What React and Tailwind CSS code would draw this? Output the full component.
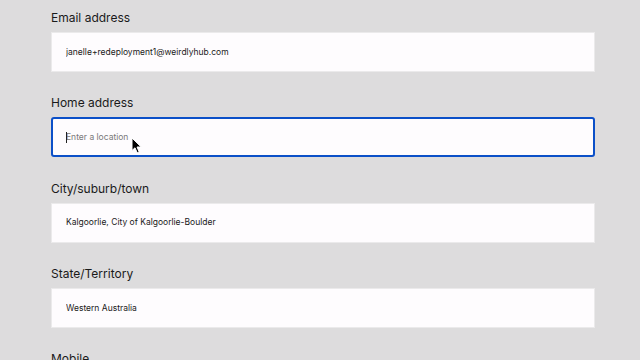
import { useState } from "react";

const fields = [
  { label: "Email address", value: "janelle+redeployment1@weirdlyhub.com" },
  { label: "Home address", value: "", placeholder: "Enter a location", focused: true },
  { label: "City/suburb/town", value: "Kalgoorlie, City of Kalgoorlie-Boulder" },
  { label: "State/Territory", value: "Western Australia" },
  { label: "Mobile", value: "" },
];

function Pointer() {
  return (
    <svg
      className="absolute left-[131px] top-[137px] pointer-events-none"
      width="12"
      height="17"
      viewBox="0 0 12 17"
    >
      <path
        d="M1 1 L1 13.5 L4 10.8 L6.2 15.8 L8.2 14.9 L6 10 L10.2 10 Z"
        fill="#000"
        stroke="#fff"
        strokeWidth="1"
        strokeLinejoin="round"
      />
    </svg>
  );
}

export default function App() {
  const [form, setForm] = useState(
    Object.fromEntries(fields.map((f) => [f.label, f.value]))
  );

  return (
    <div
      className="relative w-[640px] h-[360px] overflow-hidden bg-[#dddcdd] pl-[51px] pr-[45px] pt-[10px]"
      style={{ fontFamily: "Inter, 'Liberation Sans', sans-serif" }}
    >
      {fields.map((f) => (
        <div key={f.label} className="mb-[23.3px]">
          <label className="block text-[12px] leading-[16px] text-[#1a1a1a] mb-[6px]">
            {f.label}
          </label>
          <div
            className={
              f.focused
                ? "h-[40px] bg-[#fefcfe] border-2 border-[#0b50c8] rounded-[3px] flex items-center pl-[13px]"
                : "h-[40px] bg-[#fefcfe] border border-[#ebeaeb] flex items-center pl-[14px]"
            }
          >
            <input
              value={form[f.label]}
              placeholder={f.placeholder}
              onChange={(e) => setForm({ ...form, [f.label]: e.target.value })}
              className="w-full bg-transparent outline-none text-[8.5px] text-[#1a1a1a] placeholder:text-[#7a797a]"
            />
          </div>
        </div>
      ))}
      <div className="absolute left-[66px] top-[132px] w-px h-[11px] bg-[#222]" />
      <Pointer />
    </div>
  );
}
